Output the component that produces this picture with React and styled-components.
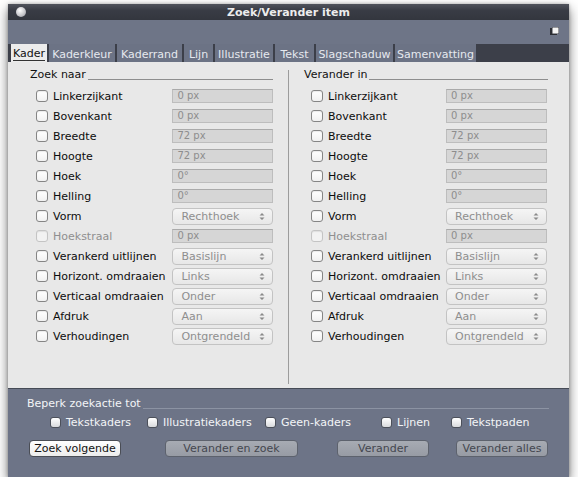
import styled, { createGlobalStyle } from "styled-components";

const GlobalStyle = createGlobalStyle`
  html, body { margin: 0; padding: 0; background: #ffffff; }
  body { font-family: "DejaVu Sans", "Liberation Sans", sans-serif; font-size: 11px; }
`;

const rows = [
  { label: "Linkerzijkant", kind: "input", value: "0 px" },
  { label: "Bovenkant", kind: "input", value: "0 px" },
  { label: "Breedte", kind: "input", value: "72 px" },
  { label: "Hoogte", kind: "input", value: "72 px" },
  { label: "Hoek", kind: "input", value: "0°" },
  { label: "Helling", kind: "input", value: "0°" },
  { label: "Vorm", kind: "select", value: "Rechthoek" },
  { label: "Hoekstraal", kind: "input", value: "0 px", disabled: true },
  { label: "Verankerd uitlijnen", kind: "select", value: "Basislijn" },
  { label: "Horizont. omdraaien", kind: "select", value: "Links" },
  { label: "Verticaal omdraaien", kind: "select", value: "Onder" },
  { label: "Afdruk", kind: "select", value: "Aan" },
  { label: "Verhoudingen", kind: "select", value: "Ontgrendeld" },
];

const tabs = [
  { name: "Kader", w: 36 },
  { name: "Kaderkleur", w: 66 },
  { name: "Kaderrand", w: 65 },
  { name: "Lijn", w: 29 },
  { name: "Illustratie", w: 58 },
  { name: "Tekst", w: 39 },
  { name: "Slagschaduw", w: 77 },
  { name: "Samenvatting", w: 81 },
];

const limits = [
  { name: "Tekstkaders", w: 97 },
  { name: "Illustratiekaders", w: 118 },
  { name: "Geen-kaders", w: 116 },
  { name: "Lijnen", w: 70 },
  { name: "Tekstpaden", w: 90 },
];

const Window = styled.div`
  margin: 4px 0 0 8px;
  width: 561px;
  box-shadow: 0 5px 11px rgba(0, 0, 0, 0.55), 0 0 3px rgba(0, 0, 0, 0.25);
`;

const TitleBar = styled.div`
  position: relative;
  height: 16px;
  background: linear-gradient(#50535c, #393c45 40%, #33363e);
  display: flex;
  align-items: center;
  justify-content: center;
  color: #ececec;
  font-weight: bold;
  font-size: 11px;
`;

const CloseDot = styled.span`
  position: absolute;
  left: 8px;
  top: 3px;
  width: 10px;
  height: 10px;
  border-radius: 50%;
  background: radial-gradient(circle at 40% 35%, #ffffff, #c8c8cc 55%, #8e9098);
`;

const Toolbar = styled.div`
  height: 24px;
  background: #6e7587;
  display: flex;
  align-items: flex-start;
  justify-content: flex-end;
  padding: 7px 10px 0 0;
  box-sizing: border-box;
`;

const TabBar = styled.div`
  height: 18px;
  background: #3c3f49;
  display: flex;
  gap: 2px;
  padding-left: 3px;
`;

const Tab = styled.div`
  width: ${(p) => p.$w}px;
  height: 18px;
  box-sizing: border-box;
  display: flex;
  align-items: center;
  justify-content: center;
  font-size: 11px;
  background: ${(p) => (p.$active ? "#ececec" : "#6c7385")};
  color: ${(p) => (p.$active ? "#111" : "#e6e9ef")};
  span {
    border-bottom: ${(p) => (p.$active ? "1px solid #333" : "none")};
    line-height: 13px;
    margin-top: 2px;
  }
`;

const Content = styled.div`
  height: 326px;
  box-sizing: border-box;
  background: #e8e8e8;
  display: grid;
  grid-template-columns: 281px 1fr;
  padding: 8px 0 4px;
`;

const Column = styled.div`
  padding-left: ${(p) => p.$pad}px;
  padding-right: ${(p) => p.$right}px;
  border-right: ${(p) => (p.$sep ? "1px solid #9c9c9c" : "none")};
`;

const GroupHead = styled.div`
  display: flex;
  align-items: flex-end;
  height: 14px;
  margin-top: -2px;
  margin-bottom: 4px;
  color: #111;
  line-height: 14px;
  &::after {
    content: "";
    flex: 1;
    margin-left: 2px;
    margin-bottom: 2px;
    border-bottom: 1px solid #8e8e8e;
  }
`;

const Row = styled.div`
  height: 20px;
  display: flex;
  align-items: center;
  padding-left: ${(p) => p.$indent}px;
`;

const Check = styled.span`
  width: 12px;
  height: 12px;
  box-sizing: border-box;
  border-radius: 3px;
  border: 1px solid ${(p) => (p.$disabled ? "#c4c4c4" : "#858585")};
  background: ${(p) => (p.$disabled ? "#f2f2f2" : "linear-gradient(#ffffff, #f1f1f1)")};
  box-shadow: inset 0 1px 1px rgba(0, 0, 0, 0.08);
  margin-right: 5px;
  flex: none;
`;

const Label = styled.span`
  width: ${(p) => p.$w}px;
  color: ${(p) => (p.$disabled ? "#8f8f8f" : "#0c0c0c")};
  white-space: nowrap;
`;

const Field = styled.div`
  width: 101px;
  height: 14px;
  box-sizing: border-box;
  background: #d6d6d6;
  border: 1px solid #bdbdbd;
  border-top-color: #aaaaaa;
  color: #8d8d8d;
  font-size: 10px;
  line-height: 12px;
  padding-left: 4px;
`;

const Select = styled.div`
  width: 101px;
  height: 17px;
  box-sizing: border-box;
  border-radius: 4px;
  border: 1px solid #c3c3c3;
  background: linear-gradient(#f5f5f5, #e7e7e7);
  color: #8e8e8e;
  font-size: 11px;
  display: flex;
  align-items: center;
  justify-content: space-between;
  padding: 0 7px 0 8px;
`;

const Bottom = styled.div`
  height: 89px;
  box-sizing: border-box;
  background: #6d7487;
  border-top: 1px solid #464b56;
  padding: 8px 20px 0 19px;
  color: #f3f4f7;
`;

const BottomHead = styled(GroupHead)`
  margin: 0 0 3px;
  color: #f3f4f7;
  &::after {
    border-bottom-color: #8c93a3;
  }
`;

const LimitRow = styled.div`
  display: flex;
  align-items: center;
  height: 16px;
  padding-left: 23px;
`;

const LimitItem = styled.div`
  width: ${(p) => p.$w}px;
  display: flex;
  align-items: center;
  white-space: nowrap;
`;

const DarkCheck = styled.span`
  width: 11px;
  height: 11px;
  box-sizing: border-box;
  border-radius: 3px;
  border: 1px solid #4c505a;
  background: linear-gradient(#ffffff, #d9dadd);
  margin-right: 5px;
`;

const ButtonRow = styled.div`
  display: flex;
  margin-top: 10px;
`;

const Button = styled.div`
  width: ${(p) => p.$w}px;
  margin-left: ${(p) => p.$ml}px;
  height: 17px;
  box-sizing: border-box;
  border-radius: 4px;
  display: flex;
  align-items: center;
  justify-content: center;
  font-size: 11px;
  border: 1px solid ${(p) => (p.$enabled ? "#4a4d55" : "#5d626d")};
  background: ${(p) =>
    p.$enabled ? "linear-gradient(#ffffff, #ececec)" : "linear-gradient(#a7abb3, #979ba4)"};
  color: ${(p) => (p.$enabled ? "#111" : "#44474f")};
`;

const Arrows = () => (
  <svg width="6" height="9" viewBox="0 0 6 9">
    <path d="M0.5 3.5 L3 1 L5.5 3.5 Z M0.5 5.5 L3 8 L5.5 5.5 Z" fill="#8a8a8a" />
  </svg>
);

const ToolIcon = () => (
  <svg width="9" height="9" viewBox="0 0 9 9">
    <rect x="0" y="1" width="7" height="7" fill="#2b2d33" />
    <rect x="2" y="0" width="7" height="7" fill="#3a3d44" />
    <rect x="2.5" y="0.5" width="6" height="6" fill="#f4f4f4" />
  </svg>
);

const Group = ({ title, pad, right, sep, indent, labelW }) => (
  <Column $pad={pad} $right={right} $sep={sep}>
    <GroupHead>{title}</GroupHead>
    {rows.map((r) => (
      <Row key={r.label} $indent={indent}>
        <Check $disabled={r.disabled} />
        <Label $w={labelW} $disabled={r.disabled}>{r.label}</Label>
        {r.kind === "input" ? (
          <Field>{r.value}</Field>
        ) : (
          <Select>
            <span>{r.value}</span>
            <Arrows />
          </Select>
        )}
      </Row>
    ))}
  </Column>
);

export default function App() {
  return (
    <>
      <GlobalStyle />
      <Window>
        <TitleBar>
          <CloseDot />
          Zoek/Verander item
        </TitleBar>
        <Toolbar>
          <ToolIcon />
        </Toolbar>
        <TabBar>
          {tabs.map((t, i) => (
            <Tab key={t.name} $w={t.w} $active={i === 0}>
              <span>{t.name}</span>
            </Tab>
          ))}
        </TabBar>
        <Content>
          <Group title="Zoek naar" pad={22} right={15} sep indent={6} labelW={120} />
          <Group title="Verander in" pad={15} right={21} indent={7} labelW={118} />
        </Content>
        <Bottom>
          <BottomHead>Beperk zoekactie tot</BottomHead>
          <LimitRow>
            {limits.map((l) => (
              <LimitItem key={l.name} $w={l.w}>
                <DarkCheck />
                {l.name}
              </LimitItem>
            ))}
          </LimitRow>
          <ButtonRow>
            <Button $w={92} $ml={2} $enabled>Zoek volgende</Button>
            <Button $w={133} $ml={44}>Verander en zoek</Button>
            <Button $w={92} $ml={39}>Verander</Button>
            <Button $w={92} $ml={27}>Verander alles</Button>
          </ButtonRow>
        </Bottom>
      </Window>
    </>
  );
}
